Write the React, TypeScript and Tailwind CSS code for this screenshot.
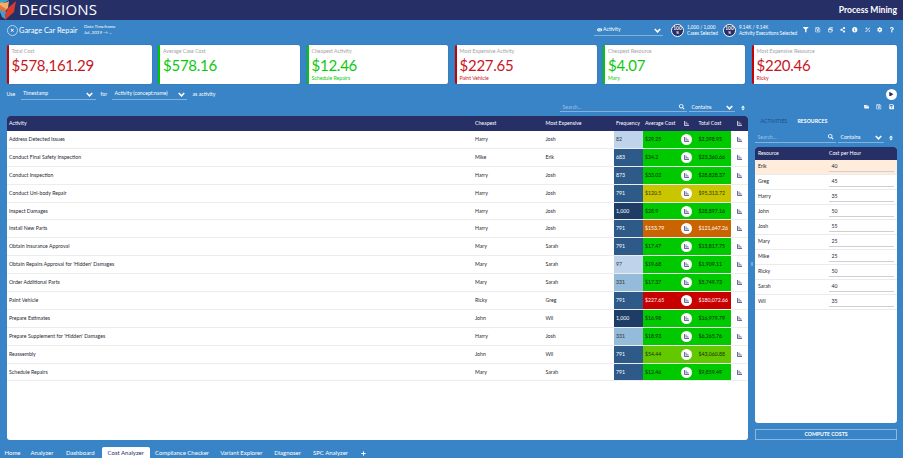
import type { ReactNode } from 'react';
import {
  FaFilter, FaRegSave, FaShareAlt, FaInfoCircle, FaCog, FaQuestion,
  FaSearch, FaSort, FaFolderOpen, FaSave, FaPlay, FaTimes, FaPlus, FaEye,
} from 'react-icons/fa';

const stats = [
  { label: 'Total Cost', value: '$578,161.29', note: '', bad: true },
  { label: 'Average Case Cost', value: '$578.16', note: '', bad: false },
  { label: 'Cheapest Activity', value: '$12.46', note: 'Schedule Repairs', bad: false },
  { label: 'Most Expensive Activity', value: '$227.65', note: 'Paint Vehicle', bad: true },
  { label: 'Cheapest Resource', value: '$4.07', note: 'Mary', bad: false },
  { label: 'Most Expensive Resource', value: '$220.46', note: 'Ricky', bad: true },
];

const freqStyles = {
  pale: 'bg-[#bfd4ea] text-[#333]',
  light: 'bg-[#94bbd9] text-[#333]',
  mid: 'bg-[#2d5a88] text-white',
  dark: 'bg-[#1e3d66] text-white',
};

const costStyles = {
  green: 'bg-[#00c900] text-[#06270a]',
  lime: 'bg-[#64c800] text-[#1a2e0a]',
  yellow: 'bg-[#c9c600] text-[#33320a]',
  orange: 'bg-[#c96400] text-white',
  red: 'bg-[#c90000] text-white',
};

type Row = [string, string, string, string, keyof typeof freqStyles, string, string, keyof typeof costStyles];

const rows: Row[] = [
  ['Address Detected Issues', 'Harry', 'Josh', '82', 'pale', '$29.25', '$2,398.95', 'green'],
  ['Conduct Final Safety Inspection', 'Mike', 'Erik', '683', 'mid', '$34.2', '$23,360.66', 'green'],
  ['Conduct Inspection', 'Harry', 'Josh', '873', 'mid', '$33.02', '$28,828.37', 'green'],
  ['Conduct Uni-body Repair', 'Harry', 'Josh', '791', 'mid', '$120.5', '$95,313.72', 'yellow'],
  ['Inspect Damages', 'Harry', 'Josh', '1,000', 'dark', '$28.9', '$28,897.16', 'green'],
  ['Install New Parts', 'Harry', 'Josh', '791', 'mid', '$153.79', '$121,647.26', 'orange'],
  ['Obtain Insurance Approval', 'Mary', 'Sarah', '791', 'mid', '$17.47', '$13,817.75', 'green'],
  ["Obtain Repairs Approval for 'Hidden' Damages", 'Mary', 'Sarah', '97', 'pale', '$19.68', '$1,909.11', 'green'],
  ['Order Additional Parts', 'Mary', 'Sarah', '331', 'light', '$17.37', '$5,749.73', 'green'],
  ['Paint Vehicle', 'Ricky', 'Greg', '791', 'mid', '$227.65', '$180,072.66', 'red'],
  ['Prepare Estimates', 'John', 'Wil', '1,000', 'dark', '$16.98', '$16,979.79', 'green'],
  ["Prepare Supplement for 'Hidden' Damages", 'Harry', 'Josh', '331', 'light', '$18.93', '$6,265.76', 'green'],
  ['Reassembly', 'John', 'Wil', '791', 'mid', '$54.44', '$43,060.88', 'lime'],
  ['Schedule Repairs', 'Mary', 'Sarah', '791', 'mid', '$12.46', '$9,859.49', 'green'],
];

const resources = [
  ['Erik', 40], ['Greg', 45], ['Harry', 35], ['John', 50], ['Josh', 55],
  ['Mary', 25], ['Mike', 25], ['Ricky', 50], ['Sarah', 40], ['Wil', 35],
];

const tabs = [
  { name: 'Home', width: 'w-[25px]' },
  { name: 'Analyzer', width: 'w-[34px]' },
  { name: 'Dashboard', width: 'w-[42.5px]' },
  { name: 'Cost Analyzer', width: 'w-[48.5px]' },
  { name: 'Compliance Checker', width: 'w-[64px]' },
  { name: 'Variant Explorer', width: 'w-[54.5px]' },
  { name: 'Diagnoser', width: 'w-[38px]' },
  { name: 'SPC Analyzer', width: 'w-[48px]' },
];

const columns = 'grid grid-cols-[466px_70.5px_70.5px_29px_34.5px_19px_34.5px_1fr]';

function ChartIcon() {
  return (
    <svg viewBox="0 0 10 10" className="size-[5px]" fill="none" stroke="currentColor">
      <path d="M1 0V9H10" strokeWidth="1.4" />
      <path d="M4 7.2V1M6.2 7.2V3.6M8.4 7.2V5.2" strokeWidth="1.2" />
    </svg>
  );
}

function Chevron() {
  return (
    <svg viewBox="0 0 14 10" className="mt-[1.5px] h-[5px] w-[7px] shrink-0" fill="none" stroke="white">
      <path d="M1.5 2L7 7.5L12.5 2" strokeWidth="3.2" />
    </svg>
  );
}

function WindowsIcon() {
  return (
    <svg viewBox="0 0 12 12" fill="none" stroke="currentColor" strokeWidth="1.4">
      <rect x="1" y="4" width="7.5" height="7" rx="1" />
      <path d="M1 5H8.5" strokeWidth="2" />
      <path d="M3.5 4V2Q3.5 1 4.5 1H10Q11 1 11 2V7Q11 8 10 8H8.5" />
    </svg>
  );
}

function WandIcon() {
  return (
    <svg viewBox="0 0 12 12" fill="none" stroke="currentColor">
      <path d="M1 11L11 1" strokeWidth="2" />
      <path d="M3 1V5M1 3H5M9.5 7.5V10.5M8 9H11" strokeWidth="1.3" />
    </svg>
  );
}

function Logo() {
  return (
    <svg viewBox="0 0 16 20" className="h-5 w-4 shrink-0">
      <path d="M0 1Q5 4 9 1L8 8L5 11L0 7Z" fill="#efb070" />
      <path d="M0 0H9L6 2L2 2L0 3Z" fill="#36a5c9" />
      <path d="M0 9L4 10L7 13L5 19L2 17L0 12Z" fill="#3c9fd5" />
      <path d="M0 5L6 9L5 12L0 10Z" fill="#e9703b" />
      <path d="M16 1L14 12L5 20L5 14L8 8Z" fill="#d63c2a" />
    </svg>
  );
}

function Field({ children, className, icon }: { children: ReactNode; className: string; icon: ReactNode }) {
  return (
    <div className={`flex items-center justify-between border-b border-[#82b1dc] px-[2.5px] ${className}`}>
      <span>{children}</span>
      {icon}
    </div>
  );
}

function Percent({ top, bottom, className }: { top: string; bottom: string; className: string }) {
  return (
    <div className={`flex items-center gap-[3px] ${className}`}>
      <div className="flex size-[13px] shrink-0 flex-col items-center justify-center rounded-full border border-white bg-[#262f66] text-[4.8px] font-bold">
        <span className="h-[5px] leading-[5px]">100</span>
        <span className="h-[4px] text-[3.2px] leading-[4px]">%</span>
      </div>
      <div className="text-[4.7px] leading-[6.4px] whitespace-nowrap">
        <div>{top}</div>
        <div>{bottom}</div>
      </div>
    </div>
  );
}

export default function App() {
  return (
    <div className="flex h-[458px] w-[903px] flex-col overflow-hidden bg-[#3984c6] font-[Lato,sans-serif] text-[5.2px] leading-[7px] text-white">
      <header className="flex h-5 shrink-0 items-center justify-between bg-[#262f66] pr-[6px]">
        <div className="flex items-center gap-[3px]">
          <Logo />
          <span className="pb-[2px] font-[Open_Sans,sans-serif] text-[15px] leading-[18px] font-medium tracking-[0.2px]">DECISIONS</span>
        </div>
        <span className="pb-[1px] text-[8.6px] leading-[10px] font-bold">Process Mining</span>
      </header>

      <div className="flex h-[25px] shrink-0 items-center pr-[8px] pl-[6.5px] pb-[5px]">
        <div className="flex size-[11px] shrink-0 items-center justify-center rounded-full border border-[#b7d2eb]">
          <FaTimes className="size-[4.5px]" />
        </div>
        <h1 className="ml-[1.5px] w-[65px] shrink-0 text-[7.4px] whitespace-nowrap">Garage Car Repair</h1>
        <div className="text-[4.5px] leading-[6.5px]">
          <div>Data Timeframe</div>
          <div>Jul, 2019 → ...</div>
        </div>
        <Field className="mr-[8px] ml-auto h-[11px] w-[69px]" icon={<Chevron />}>
          <span className="flex items-center gap-[1px]"><FaEye className="size-[5.5px]" />Activity</span>
        </Field>
        <Percent className="w-[52px]" top="1,000 / 1,000" bottom="Cases Selected" />
        <Percent className="w-[80px]" top="9.14K / 9.14K" bottom="Activity Executions Selected" />
        <div className="flex w-[92px] items-center justify-between [&>svg]:size-[5.5px]">
          <FaFilter /><FaRegSave /><WindowsIcon /><FaShareAlt /><FaInfoCircle /><WandIcon /><FaCog /><FaQuestion />
        </div>
      </div>

      <div className="grid h-[39px] shrink-0 grid-cols-[145px_142px_141.5px_142px_142px_145px] justify-between pr-[6.5px] pl-[6.5px]">
        {stats.map((s) => (
          <div
            key={s.label}
            className={`rounded-[2px] border-l-2 bg-white pt-[3px] pl-[3px] shadow-[0_0_1px_rgba(0,0,0,0.35)] ${s.bad ? 'border-[#c90000] text-[#c9141d]' : 'border-[#00c900] text-[#0dc90d]'}`}
          >
            <div className="text-[5.2px] leading-[7px] text-[#a3a3a3]">{s.label}</div>
            <div className="h-[20px] text-[15px] leading-[21px] tracking-[-0.25px]">{s.value}</div>
            <div className="text-[5.2px] leading-[7px]">{s.note}</div>
          </div>
        ))}
      </div>

      <div className="flex h-[20px] shrink-0 items-center pr-[6px] pl-[6.5px]">
        <span className="w-[14px]">Use</span>
        <Field className="h-[11px] w-[75px]" icon={<Chevron />}>Timestamp</Field>
        <span className="w-[16.5px] pl-[5px]">for</span>
        <Field className="h-[11px] w-[75px]" icon={<Chevron />}>Activity (concept:name)</Field>
        <span className="pl-[5.5px]">as activity</span>
        <div className="ml-auto flex size-[11px] items-center justify-center rounded-full bg-white text-[#262f66]">
          <FaPlay className="size-[4.5px]" />
        </div>
      </div>

      <main className="flex h-[336px] shrink-0 pr-[6px] pl-[6.5px]">
        <section className="flex w-[741.5px] flex-col">
          <div className="flex h-[12px] shrink-0 justify-end pr-[2.5px]">
            <Field className="mr-[2px] h-[8px] w-[127px] pb-[1px]" icon={<FaSearch className="size-[5.5px]" />}>
              <span className="text-[#9dc3e6]">Search...</span>
            </Field>
            <Field className="h-[8px] w-[46px] pb-[1px]" icon={<Chevron />}>Contains</Field>
            <FaSort className="mt-[0.5px] ml-[4.5px] size-[6px]" />
          </div>
          <div className="flex flex-1 flex-col overflow-hidden rounded-[3px] bg-white text-[#252831]">
            <div className={`${columns} h-[15px] shrink-0 items-center bg-[#262f66] text-white`}>
              <span className="pl-[2.5px]">Activity</span>
              <span className="pl-[2.5px]">Cheapest</span>
              <span className="pl-[2.5px]">Most Expensive</span>
              <span className="pl-[2.5px]">Frequency</span>
              <span className="pl-[2.5px] whitespace-nowrap">Average Cost</span>
              <span className="flex justify-center"><ChartIcon /></span>
              <span className="pl-[2.5px]">Total Cost</span>
              <span className="flex justify-center"><ChartIcon /></span>
            </div>
            {rows.map(([name, cheap, expensive, freq, tone, avg, total, heat]) => (
              <div key={name} className={`${columns} h-[17.9px] shrink-0 border-b border-[#e6e6e6]/70 [&>*]:flex [&>*]:items-center`}>
                <span className="pl-[2.5px]">{name}</span>
                <span className="pl-[2.5px]">{cheap}</span>
                <span className="pl-[2.5px]">{expensive}</span>
                <span className={`pl-[2.5px] ${freqStyles[tone]}`}>{freq}</span>
                <span className={`pl-[2.5px] ${costStyles[heat]}`}>{avg}</span>
                <span className={`justify-center ${costStyles[heat]}`}>
                  <i className="flex size-[11px] items-center justify-center rounded-full bg-white text-[#262f66]"><ChartIcon /></i>
                </span>
                <span className={`pl-[2.5px] ${costStyles[heat]}`}>{total}</span>
                <span className="justify-center text-[#262f66]"><ChartIcon /></span>
              </div>
            ))}
          </div>
        </section>

        <div className="flex w-[7px] shrink-0 items-center justify-center pb-[16px]">
          <div className="h-[4px] w-[2px] bg-[#75a9d9]" />
        </div>

        <aside className="flex w-[142px] flex-col">
          <div className="flex h-[10px] shrink-0 justify-end gap-[7px] pr-[3px] [&>svg]:size-[5.5px]">
            <FaFolderOpen /><FaRegSave /><FaSave />
          </div>
          <div className="flex h-[15px] shrink-0 items-center pl-[5.5px]">
            <span className="w-[37px] text-[#1f4a8a]">ACTIVITIES</span>
            <span className="font-bold">RESOURCES</span>
          </div>
          <div className="flex h-[17.5px] shrink-0 pt-[3.5px]">
            <Field className="mr-[2px] h-[10px] w-[81px]" icon={<FaSearch className="size-[5.5px]" />}>
              <span className="text-[#9dc3e6]">Search...</span>
            </Field>
            <Field className="h-[10px] w-[46px]" icon={<Chevron />}>Contains</Field>
            <FaSort className="mt-[2.5px] ml-[4px] size-[6px]" />
          </div>
          <div className="h-[276px] shrink-0 overflow-hidden rounded-[3px] bg-white text-[#252831]">
            <div className="grid h-[13px] grid-cols-[71px_1fr] items-center bg-[#262f66] pl-[3px] text-white">
              <span>Resource</span>
              <span>Cost per Hour</span>
            </div>
            {resources.map(([name, cost]) => (
              <div key={name} className="grid h-[15.05px] grid-cols-[71px_1fr] items-center border-b border-[#ebebeb] pr-[3px] pl-[3px] nth-2:bg-[#ffecdb]">
                <span>{name}</span>
                <span className="h-[10px] border-b border-[#cfcfcf] pl-[2.5px] leading-[9px]">{cost}</span>
              </div>
            ))}
          </div>
          <button className="mt-[6px] h-[11.5px] shrink-0 border border-[#8bb7de] text-[5.2px] leading-[9px] font-bold">COMPUTE COSTS</button>
        </aside>
      </main>

      <nav className="flex flex-1 items-end text-[6px] leading-[10px]">
        {tabs.map((t) => (
          <span
            key={t.name}
            className={`flex h-[11px] items-center justify-center pt-[1px] whitespace-nowrap ${t.width} ${t.name === 'Cost Analyzer' ? 'rounded-t-[2px] bg-white text-[#262f66]' : ''}`}
          >
            {t.name}
          </span>
        ))}
        <FaPlus className="mb-[2px] ml-[6px] size-[5px]" />
      </nav>
    </div>
  );
}
